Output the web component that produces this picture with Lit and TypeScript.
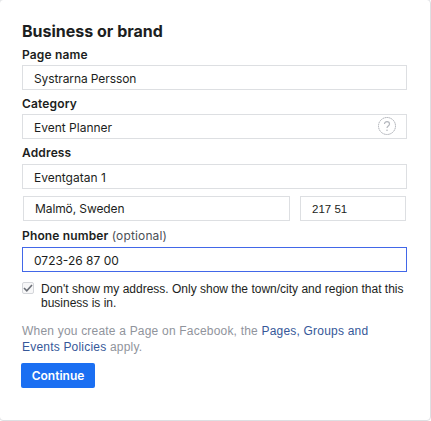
import { LitElement, html, css } from "lit";
import { customElement } from "lit/decorators.js";

@customElement("app-root")
export class AppRoot extends LitElement {
  static styles = css`
    :host { display: block; width: 431px; height: 421px; overflow: hidden; background: #fff; font-family: "Inter", sans-serif; color: #1c1e21; }
    .card { box-sizing: border-box; width: 432px; height: 422px; margin: -1px 0 0 -1px; background: #fff; border: 1px solid #dddfe2; border-radius: 4px; padding: 22px 23px 0 22px; }
    h1 { margin: 0 0 6px; font-size: 16px; line-height: 19px; font-weight: 700; }
    .label { font-size: 12px; line-height: 16px; font-weight: 600; height: 16px; margin-bottom: 2px; letter-spacing: .15px; }
    .label.wide { margin-bottom: 3px; }
    .label span { font-weight: 400; color: #4b4f56; }
    .input { box-sizing: border-box; height: 25px; border: 1px solid #dddfe2; font-size: 12px; line-height: 26px; padding-left: 11px; margin-bottom: 6px; position: relative; }
    .input.flush { margin-bottom: 0; }
    .tight { letter-spacing: -.1px; }
    .row { display: flex; gap: 10px; margin: 7px 1px 7px 1px; }
    .row .input { margin: 0; line-height: 24px; }
    .city { flex: 1; }
    .zip { width: 106px; font-family: "Liberation Sans", sans-serif; font-size: 11.5px; }
    .focus { border-color: #4267e8; }
    .help { position: absolute; right: 9px; top: 1px; width: 20px; height: 20px; }
    .check { display: flex; gap: 7px; margin-top: 10px; font-family: "Liberation Sans", sans-serif; font-size: 12px; line-height: 14px; }
    .box { box-sizing: border-box; width: 12px; height: 12px; flex: none; border: 1px solid #d4d6da; border-radius: 2px; background: #f7f7f8; }
    .box svg { display: block; }
    .policy { margin-top: 13px; font-size: 12px; line-height: 16px; letter-spacing: .2px; color: #90949c; font-family: "Liberation Sans", sans-serif; }
    .policy a { color: #365899; text-decoration: none; }
    button { display: block; box-sizing: border-box; margin: 8px 0 0 -1px; width: 74px; height: 25px; background: #1b6ff2; border: 0; border-radius: 2px; color: #fff; font: 600 12px "Inter", sans-serif; padding: 0; }
  `;
  render() {
    return html`<div class="card">
      <h1>Business or brand</h1>
      <div class="label">Page name</div>
      <div class="input tight">Systrarna Persson</div>
      <div class="label">Category</div>
      <div class="input">Event Planner
        <svg class="help" viewBox="0 0 20 20"><circle cx="10" cy="10" r="8.5" fill="none" stroke="#a8abb2" stroke-dasharray="1.5 .6"/><path d="M7.5 8c0-3.2 5-3.2 5 0 0 2-2.5 2-2.5 4" fill="none" stroke="#b4b7bd" stroke-width="1.2"/><circle cx="10" cy="14.3" r=".8" fill="#b4b7bd"/></svg>
      </div>
      <div class="label wide">Address</div>
      <div class="input flush">Eventgatan 1</div>
      <div class="row"><div class="input city tight">Malmö, Sweden</div><div class="input zip">217 51</div></div>
      <div class="label wide">Phone number <span>(optional)</span></div>
      <div class="input focus">0723-26 87 00</div>
      <div class="check">
        <div class="box"><svg width="10" height="10" viewBox="0 0 10 10"><path d="M1 5 3.8 7.8 9 2" fill="none" stroke="#6b6f76" stroke-width="1.6"/></svg></div>
        <div>Don't show my address. Only show the town/city and region that this business is in.</div>
      </div>
      <div class="policy">When you create a Page on Facebook, the <a>Pages, Groups and Events Policies</a> apply.</div>
      <button>Continue</button>
    </div>`;
  }
}
